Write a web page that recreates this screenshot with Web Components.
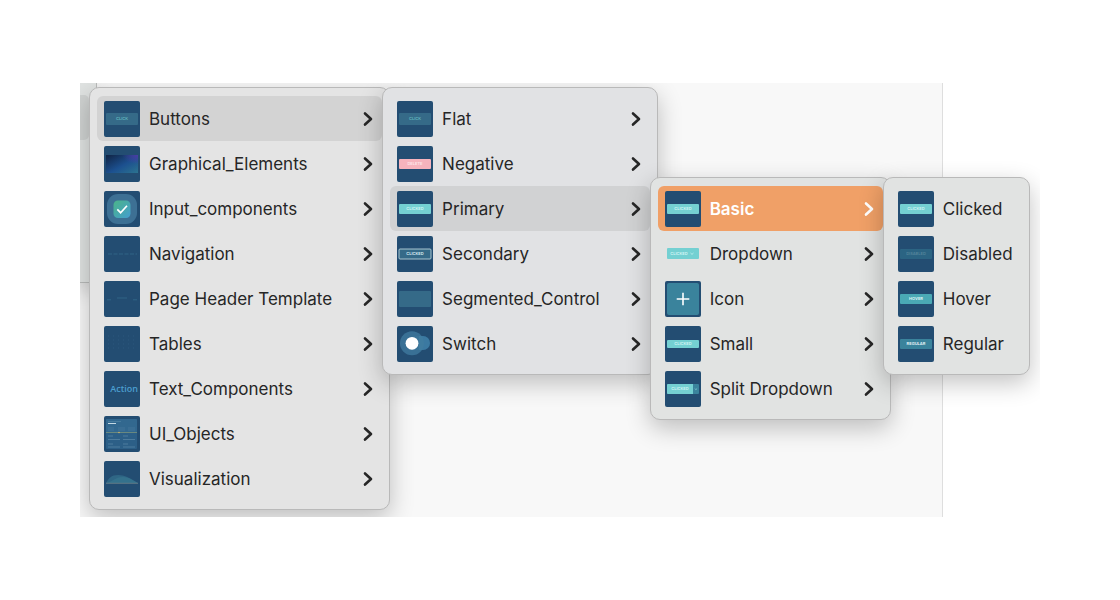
<!DOCTYPE html>
<html lang="en">
<head>
<meta charset="utf-8">
<title>Component menu</title>
<style>
	body {
		margin: 0;
		background: #fff;
		color: #262626;
		font: 17px/20px Inter, "Liberation Sans", sans-serif;
	}
</style>
</head>
<body>

<menu-stage>
	<menu-edge></menu-edge>

	<cascade-menu label="Components">
		<menu-item thumb="flat" open more>Buttons</menu-item>
		<menu-item thumb="gradient" more>Graphical_Elements</menu-item>
		<menu-item thumb="checkbox" more>Input_components</menu-item>
		<menu-item thumb="navigation" more>Navigation</menu-item>
		<menu-item thumb="header" more>Page Header Template</menu-item>
		<menu-item thumb="table" more>Tables</menu-item>
		<menu-item thumb="text" more>Text_Components</menu-item>
		<menu-item thumb="objects" more>UI_Objects</menu-item>
		<menu-item thumb="chart" more>Visualization</menu-item>
	</cascade-menu>

	<cascade-menu label="Buttons" tone="cool">
		<menu-item thumb="flat" more>Flat</menu-item>
		<menu-item thumb="negative" more>Negative</menu-item>
		<menu-item thumb="clicked" open more>Primary</menu-item>
		<menu-item thumb="secondary" more>Secondary</menu-item>
		<menu-item thumb="segmented" more>Segmented_Control</menu-item>
		<menu-item thumb="switch" more>Switch</menu-item>
	</cascade-menu>

	<cascade-menu label="Primary" tone="green" row="2">
		<menu-item thumb="clicked" active more>Basic</menu-item>
		<menu-item thumb="dropdown" more>Dropdown</menu-item>
		<menu-item thumb="plus" more>Icon</menu-item>
		<menu-item thumb="small" more>Small</menu-item>
		<menu-item thumb="split" more>Split Dropdown</menu-item>
	</cascade-menu>

	<cascade-menu label="Basic" tone="green" row="2">
		<menu-item thumb="clicked">Clicked</menu-item>
		<menu-item thumb="disabled">Disabled</menu-item>
		<menu-item thumb="hover">Hover</menu-item>
		<menu-item thumb="regular">Regular</menu-item>
	</cascade-menu>
</menu-stage>

<script>
	const navy = `<rect width="36" height="36" rx="2" fill="#234d72"/>`;

	// a small button with its caption centred in it
	const pill = (text, fill, color, y = 13, h = 10, extra = "") => `
		<rect x="2" y="${y}" width="32" height="${h}" rx="1" fill="${fill}" ${extra}/>
		<text x="18" y="${y + h / 2 + 1.4}" fill="${color}">${text}</text>`;

	const thumbs = {
		flat: navy + pill("CLICK", "#356a88", "#61b6bd", 12, 12),
		negative: navy + pill("DELETE", "#f6b3bd", "#fde4e8"),
		clicked: navy + pill("CLICKED", "#74d0d2", "#d2f5f4"),
		small: navy + pill("CLICKED", "#74d0d2", "#d2f5f4", 14, 8),
		disabled: navy + pill("DISABLED", "#2b6483", "#54849b"),
		hover: navy + pill("HOVER", "#4aa9b5", "#e4f8f8", 13, 10),
		regular: navy + pill("REGULAR", "#3a839c", "#eaf7fa"),
		secondary: navy + pill("CLICKED", "#356a88", "#dceef2", 13, 10, `stroke="#b5d0d8" stroke-width=".9"`),
		segmented: navy + `<rect x="2" y="10" width="32" height="16" rx="1" fill="#356a88"/>`,
		dropdown: `
			<rect x="2" y="12" width="32" height="11" rx="1" fill="#74d0d2"/>
			<text x="14" y="19" fill="#d2f5f4">CLICKED</text>
			<path d="M25.5 17l1.5 1.4 1.5-1.4" stroke="#d2f5f4" stroke-width=".7" fill="none"/>`,
		split: navy + `
			<rect x="2" y="13" width="32" height="10" rx="1" fill="#3a839c"/>
			<path d="M3 13h25v10H3q-1 0-1-1v-8q0-1 1-1z" fill="#74d0d2"/>
			<text x="15" y="19.4" fill="#d2f5f4">CLICKED</text>
			<path d="M29.7 17.5l1.2 1.2 1.2-1.2" stroke="#8ed2da" stroke-width=".7" fill="none"/>`,
		plus: navy + `
			<rect x="2" y="2" width="32" height="32" rx="2" fill="#3a839c"/>
			<path d="M18 11.7v12.6M11.7 18h12.6" stroke="#fff" stroke-width="1.6"/>`,
		switch: navy + `
			<rect x="12" y="10" width="21" height="14" rx="7" fill="#35709a"/>
			<circle cx="15" cy="17.3" r="12" fill="#3c7499" opacity=".9"/>
			<path d="M22 10h4a7 7 0 0 1 0 14h-4z" fill="#4a8fb4" opacity=".3"/>
			<circle cx="15" cy="17.3" r="6.4" fill="#fff"/>`,
		checkbox: navy + `
			<defs><linearGradient id="g" x2="1" y2="1">
				<stop stop-color="#4bb488"/><stop offset="1" stop-color="#449ed0"/>
			</linearGradient></defs>
			<rect x="3" y="3" width="30" height="30" rx="11" fill="#3d7094"/>
			<rect x="9.5" y="9.5" width="17" height="17.5" rx="4.5" fill="url(#g)"/>
			<path d="M13.3 18.4l3.3 3.3 6.4-7" stroke="#fff" stroke-width="1.7" fill="none"/>`,
		gradient: navy + `
			<defs>
				<linearGradient id="g" x2="1" y2="1">
					<stop stop-color="#102343"/><stop offset=".55" stop-color="#1c508f"/><stop offset="1" stop-color="#2c7490"/>
				</linearGradient>
				<radialGradient id="r" cx="1" cy="0" r=".5">
					<stop stop-color="#4b3ca5"/><stop offset="1" stop-color="#4b3ca5" stop-opacity="0"/>
				</radialGradient>
			</defs>
			<rect x="2" y="9" width="32" height="18" fill="url(#g)"/>
			<rect x="2" y="9" width="32" height="18" fill="url(#r)"/>`,
		navigation: navy + `<path d="M4 18h29" stroke="#34698b" stroke-width=".8" stroke-dasharray="4 1.5"/>`,
		header: navy + `<path d="M3 18.8h4M29 18.8h4M13 17h10" stroke="#34698b" stroke-width=".8"/>`,
		table: navy + `
			<path d="M4 10h29M4 14h29M4 18h29M4 22h29" stroke="#2e5c80" stroke-width=".8" stroke-dasharray="1 4"/>`,
		text: navy + `<text class="action" x="34" y="21" fill="#4c9fd0">Action</text>`,
		objects: navy + `
			<rect x="2" y="3" width="31" height="30" rx="1" fill="#2c5f87"/>
			<rect x="2" y="3" width="31" height="13" rx="1" fill="#32688f"/>
			<path d="M4 5.5h13" stroke="#5688a6" stroke-width=".6"/>
			<path d="M4 7.5h8" stroke="#c5d9e4"/>
			<path d="M4 12h6M14 12h7M24 12h7M4 14h6M14 14h7M24 14h7" stroke="#4c7d9e" stroke-width=".7"/>
			<path d="M2 16.5h31" stroke="#78937e" stroke-width=".8"/>
			<circle cx="15" cy="16.5" r=".8" fill="#d0b567"/>
			<path d="M4 20h5M19 20h5M4 28h5M19 28h5M4 23.5h12M19 23.5h12M4 31h12M19 31h12" stroke="#5d8aa6" stroke-width=".7"/>`,
		chart: navy + `
			<path d="M2 22C5 17 7 14 14 14c8 0 15 5 20 8z" fill="#2f6685"/>
			<path d="M2 22c6-1 9-6 17-6 7 0 10 4 15 6z" fill="#397891" opacity=".6"/>
			<path d="M2 22.3h32" stroke="#70848d" stroke-width=".8"/>`,
	};

	customElements.define("menu-stage", class extends HTMLElement {
		constructor() {
			super();
			this.attachShadow({ mode: "open" }).innerHTML = `
				<style>
					:host {
						--page-rest: 97px;
						display: flex;
						align-items: flex-start;
						overflow: hidden;
						margin: 83px 80px;
						padding: 4px 0 7px;
						background: linear-gradient(#f8f8f8, #f8f8f8) no-repeat 0 0 / calc(100% - var(--page-rest) - 1px) 100%,
							linear-gradient(#dedede, #dedede) no-repeat 0 0 / calc(100% - var(--page-rest)) 100%;
					}
				</style>
				<slot></slot>
			`;
		}
	});

	// visible edge of the menu that opened the first level
	customElements.define("menu-edge", class extends HTMLElement {
		constructor() {
			super();
			this.attachShadow({ mode: "open" }).innerHTML = `
				<style>
					:host {
						box-sizing: border-box;
						flex: none;
						width: 17px;
						height: 200px;
						margin-top: -4px;
						padding-top: 12px;
						background: #e0e3e2;
						border: solid #b9bbba;
						border-width: 0 1px 1px 0;
						box-shadow: 0 8px 20px rgb(0 0 0 / .22);
					}
					div {
						height: 45px;
						margin-right: 7px;
						border-radius: 0 5px 5px 0;
						background: #d0d3d2;
					}
				</style>
				<div></div>
			`;
		}
	});

	customElements.define("cascade-menu", class extends HTMLElement {
		constructor() {
			super();
			const row = Number(this.getAttribute("row")) || 0;
			this.attachShadow({ mode: "open" }).innerHTML = `
				<style>
					:host {
						--row: 45px;
						flex: none;
						display: block;
						position: relative;
						margin-left: -8px;
						margin-top: calc(var(--row) * ${row});
						padding: 8px 7px;
						border: 1px solid #b9b9b9;
						border-radius: 10px;
						background: #e4e4e4;
						box-shadow: 0 8px 24px rgb(0 0 0 / .24);
					}
					:host([tone=cool]) { background: #e1e2e4 }
					:host([tone=green]) { background: #e1e3e2 }
					[part=list] { display: flex; flex-direction: column }
				</style>
				<div part="list" role="menu" aria-label="${this.getAttribute("label")}"><slot></slot></div>
			`;
		}
	});

	customElements.define("menu-item", class extends HTMLElement {
		constructor() {
			super();
			const more = this.hasAttribute("more");
			const chevron = `
				<svg part="chevron" viewBox="0 0 10 16" aria-hidden="true">
					<path d="M2 2.5L8 8l-6 5.5"/>
				</svg>`;

			this.attachShadow({ mode: "open" }).innerHTML = `
				<style>
					:host { display: block }
					button {
						display: flex;
						align-items: center;
						width: 100%;
						height: var(--row);
						padding: 0 9px 0 7px;
						border: none;
						border-radius: 6px;
						background: transparent;
						color: inherit;
						font: inherit;
						text-align: left;
						white-space: nowrap;
					}
					:host([open]) button { background: rgb(0 0 0 / .07) }
					:host([active]) button {
						background: #f0a067;
						color: #fff;
						font-weight: 600;
					}
					[part=thumb] { flex: none; width: 36px; height: 36px; margin-right: 9px }
					[part=thumb] text {
						font: 600 4px Inter, sans-serif;
						text-anchor: middle;
					}
					[part=thumb] .action { font: 600 9px "Open Sans", sans-serif; text-anchor: end }
					[part=label] { flex: 1 }
					[part=chevron] {
						flex: none;
						width: 10px;
						height: 16px;
						margin-left: 31px;
						fill: none;
						stroke: currentcolor;
						stroke-width: 2.6;
						stroke-linecap: round;
						stroke-linejoin: round;
					}
				</style>
				<button type="button" role="menuitem" ${more ? `aria-haspopup="menu"` : ""}>
					<svg part="thumb" viewBox="0 0 36 36" aria-hidden="true">${thumbs[this.getAttribute("thumb")]}</svg>
					<span part="label"><slot></slot></span>
					${more ? chevron : ""}
				</button>
			`;
		}
	});
</script>
</body>
</html>
